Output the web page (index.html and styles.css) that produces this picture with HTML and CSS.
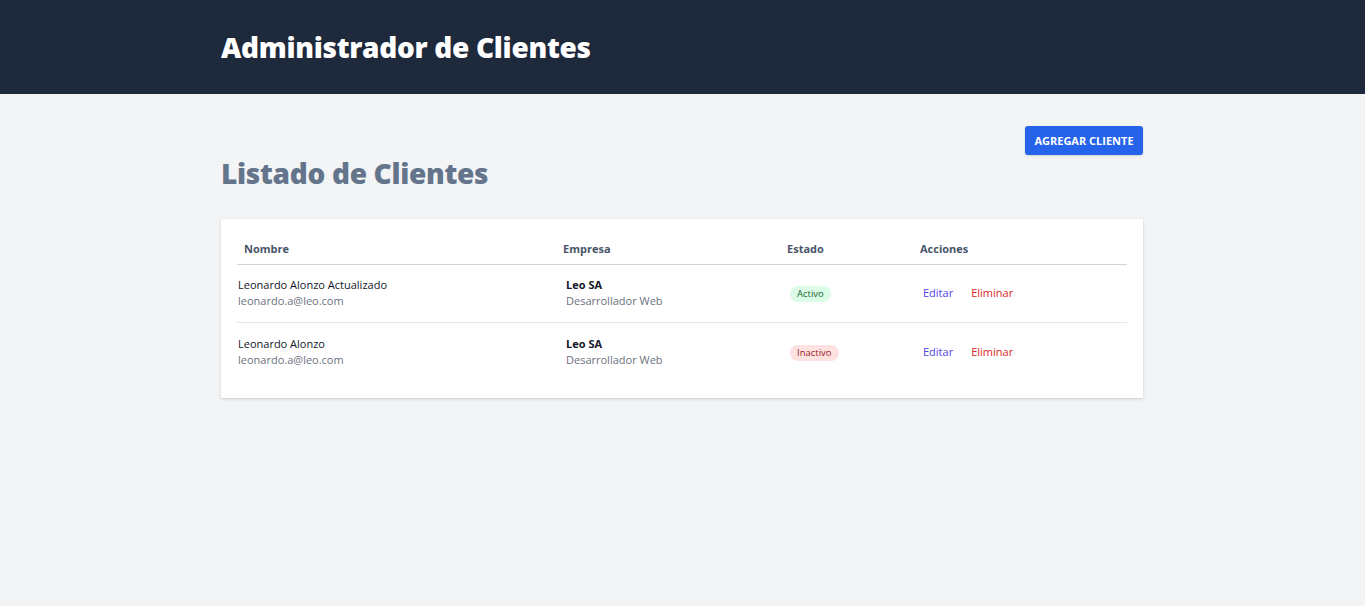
FILE: index.html
```html
<!DOCTYPE html>
<html lang="es">
<head>
<meta charset="utf-8">
<title>Administrador de Clientes</title>
<link rel="stylesheet" href="styles.css">
</head>
<body>
<header class="topbar">
  <div class="container">
    <h1 class="brand">Administrador de Clientes</h1>
  </div>
</header>
<main class="container main">
  <div class="toolbar">
    <button class="btn-add">AGREGAR CLIENTE</button>
  </div>
  <h2 class="page-title">Listado de Clientes</h2>
  <div class="card">
    <table class="clients">
      <colgroup>
        <col class="c-name"><col class="c-company"><col class="c-state"><col class="c-actions">
      </colgroup>
      <thead>
        <tr>
          <th>Nombre</th>
          <th>Empresa</th>
          <th>Estado</th>
          <th>Acciones</th>
        </tr>
      </thead>
      <tbody>
        <tr>
          <td class="cell-name">
            <div class="name">Leonardo Alonzo Actualizado</div>
            <div class="sub">leonardo.a@leo.com</div>
          </td>
          <td class="cell">
            <div class="company">Leo SA</div>
            <div class="sub">Desarrollador Web</div>
          </td>
          <td class="cell"><span class="badge badge-on">Activo</span></td>
          <td class="cell"><a class="link-edit">Editar</a><a class="link-del">Eliminar</a></td>
        </tr>
        <tr>
          <td class="cell-name">
            <div class="name">Leonardo Alonzo</div>
            <div class="sub">leonardo.a@leo.com</div>
          </td>
          <td class="cell">
            <div class="company">Leo SA</div>
            <div class="sub">Desarrollador Web</div>
          </td>
          <td class="cell"><span class="badge badge-off">Inactivo</span></td>
          <td class="cell"><a class="link-edit">Editar</a><a class="link-del">Eliminar</a></td>
        </tr>
      </tbody>
    </table>
  </div>
</main>
</body>
</html>
```
FILE: styles.css
```css
* { box-sizing: border-box; }
html, body { margin: 0; padding: 0; }
body {
  background: #f3f4f6;
  font-family: "Open Sans", "Noto Sans", sans-serif;
  color: #111827;
  min-height: 606px;
}
.container {
  width: 922px;
  margin-left: calc(50% - 461.5px);
  margin-right: auto;
}
.topbar {
  background: #1e293b;
  height: 94px;
  display: flex;
  align-items: center;
}
.brand {
  margin: 0;
  color: #fff;
  font-family: "Open Sans", sans-serif;
  font-weight: 800;
  font-size: 28px;
  line-height: 36px;
  letter-spacing: -0.3px;
}
.main { padding-top: 32px; }
.toolbar {
  display: flex;
  justify-content: flex-end;
}
.btn-add {
  background: #2563eb;
  color: #fff;
  border: 0;
  border-radius: 3px;
  height: 29px;
  width: 118px;
  font-family: "Open Sans", sans-serif;
  font-weight: 700;
  font-size: 11px;
  box-shadow: 0 1px 2px rgba(0,0,0,.15);
  padding: 0;
}
.page-title {
  margin: 0;
  color: #64748b;
  font-family: "Open Sans", sans-serif;
  font-weight: 800;
  font-size: 28px;
  line-height: 36px;
  letter-spacing: -0.3px;
}
.card {
  margin-top: 28px;
  background: #fff;
  box-shadow: 0 1px 3px rgba(0,0,0,.12), 0 1px 2px rgba(0,0,0,.06);
  padding: 15px 16px 17px;
}
.clients {
  width: 100%;
  border-collapse: collapse;
  table-layout: fixed;
}
.c-name { width: 319px; }
.c-company { width: 224px; }
.c-state { width: 133px; }
.c-actions { width: auto; }
.clients th {
  text-align: left;
  font-size: 11px;
  line-height: 16px;
  font-weight: 700;
  color: #475569;
  padding: 7px 7px 7px;
  border-bottom: 1px solid #d1d5db;
}
.clients td {
  vertical-align: middle;
  font-size: 11px;
  line-height: 16px;
  padding: 12px 10px 13px;
  border-bottom: 1px solid #e5e7eb;
}
.clients tbody tr:last-child td { border-bottom: 0; padding-top: 13px; }
.clients td.cell-name { padding-left: 1px; }
.name, .company {
  font-size: 11px;
  line-height: 16px;
  color: #111827;
}
.company { font-weight: 700; }
.sub {
  font-size: 11px;
  line-height: 16px;
  color: #6b7280;
}
.badge {
  display: inline-block;
  vertical-align: middle;
  font-size: 9.5px;
  line-height: 16px;
  padding: 0 7px;
  border-radius: 9px;
}
.badge-on { background: #dcfce7; color: #166534; }
.badge-off { background: #fee2e2; color: #991b1b; }
.link-edit, .link-del {
  font-size: 11px;
  cursor: pointer;
}
.link-edit { color: #4f46e5; margin-right: 18px; }
.link-del { color: #dc2626; }
```
